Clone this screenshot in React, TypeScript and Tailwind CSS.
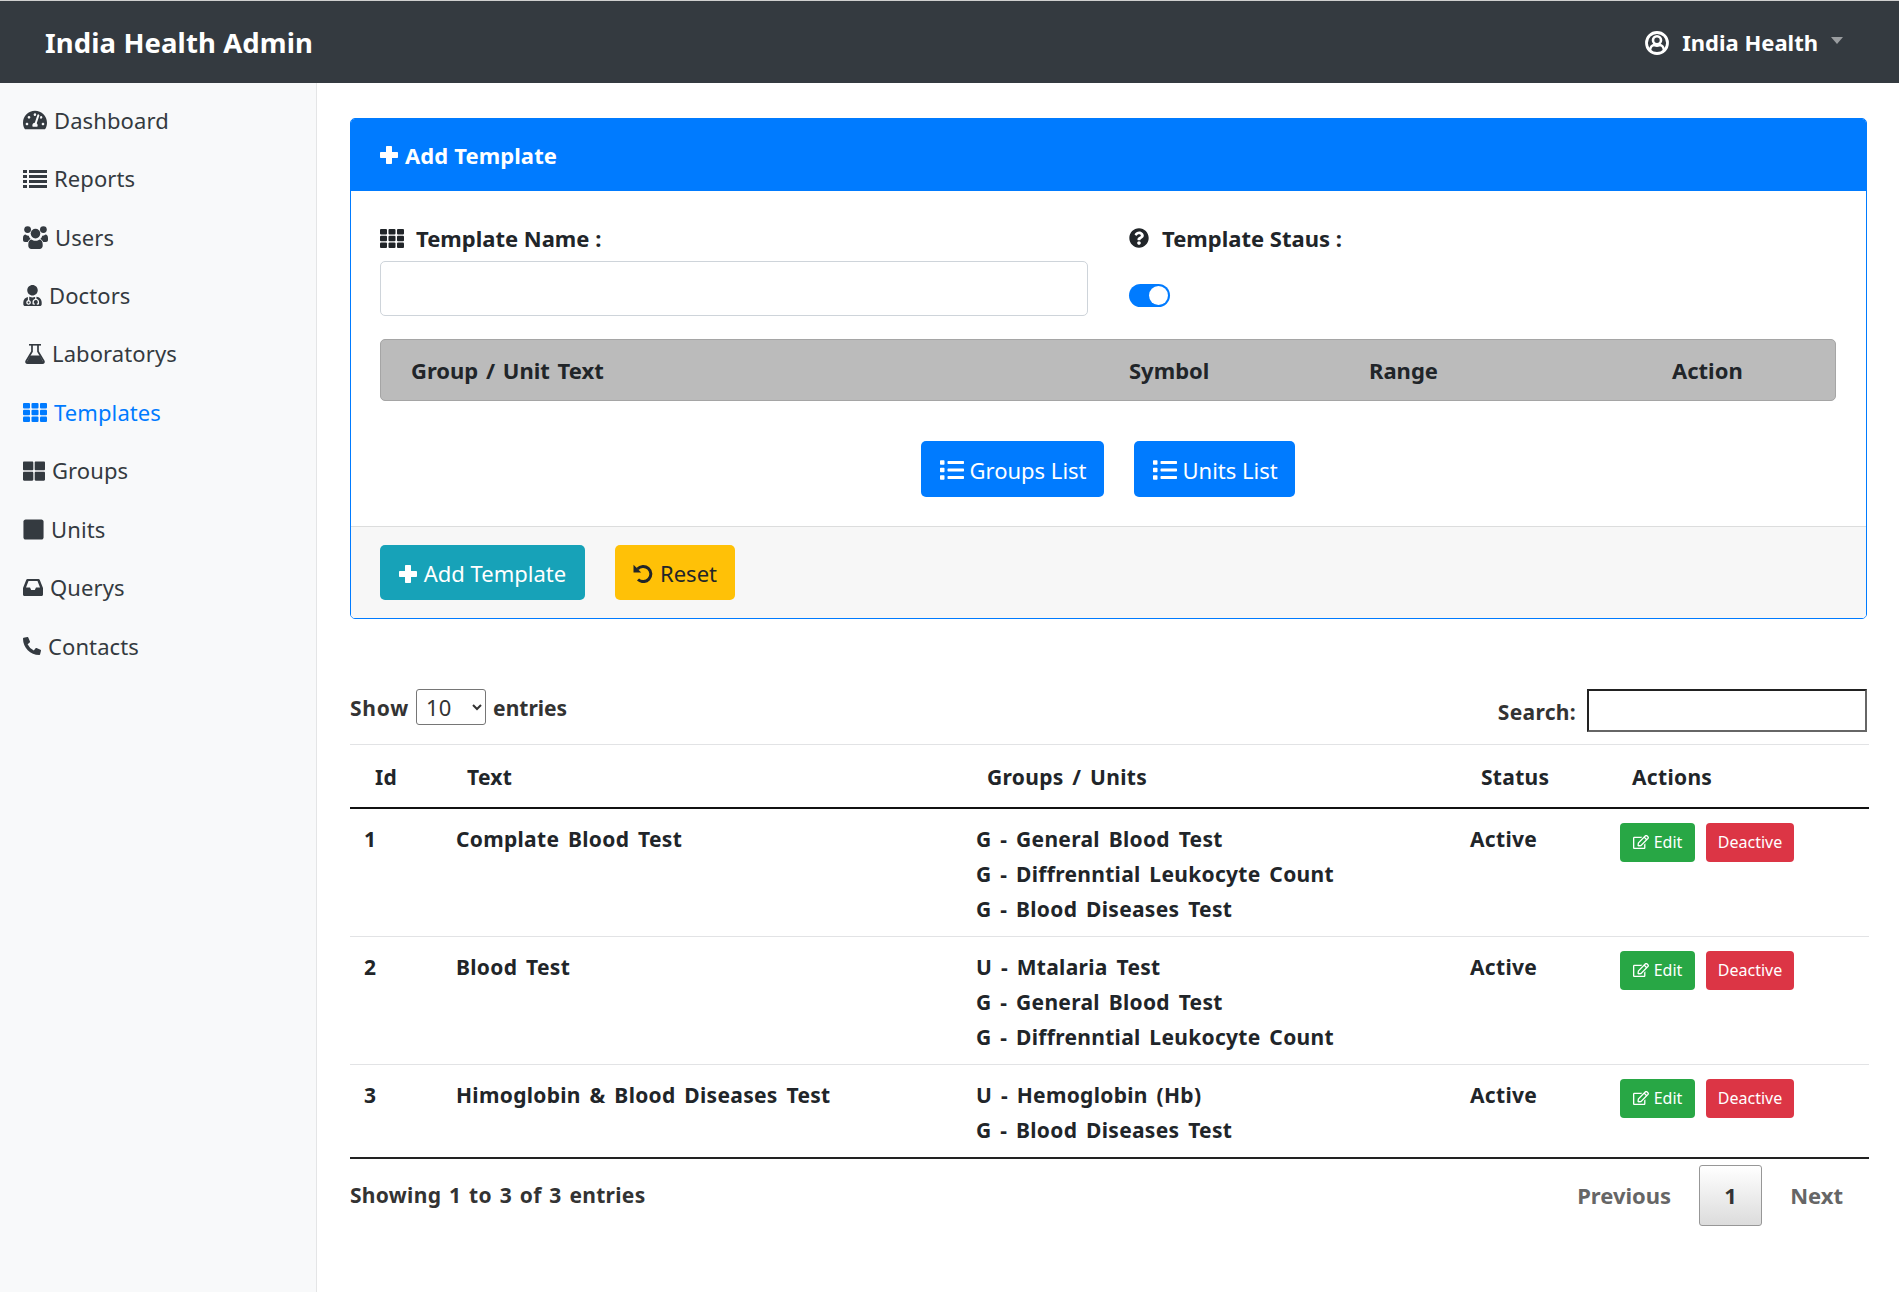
import {
  FaTachometerAlt,
  FaList,
  FaUserMd,
  FaThLarge,
  FaSquare,
  FaPhoneAlt,
  FaQuestionCircle,
  FaRegEdit,
} from "react-icons/fa";

// the reference uses older icon shapes than react-icons has, so a few are drawn here
function ListIcon() {
  return (
    <svg viewBox="0 0 24 19" fill="currentColor" className="w-[24px] h-[19px] mr-[7px]">
      <path d="M0 1h4v3H0zM6 1h18v3H6zM0 6h4v3H0zM6 6h18v3H6zM0 11h4v3H0zM6 11h18v3H6zM0 16h4v3H0zM6 16h18v3H6z" />
    </svg>
  );
}

function ThIcon(props: { className: string }) {
  return (
    <svg viewBox="0 0 24 19" fill="currentColor" className={props.className}>
      <rect x="0" y="0" width="7" height="5.4" rx="1" />
      <rect x="8.5" y="0" width="7" height="5.4" rx="1" />
      <rect x="17" y="0" width="7" height="5.4" rx="1" />
      <rect x="0" y="6.8" width="7" height="5.4" rx="1" />
      <rect x="8.5" y="6.8" width="7" height="5.4" rx="1" />
      <rect x="17" y="6.8" width="7" height="5.4" rx="1" />
      <rect x="0" y="13.6" width="7" height="5.4" rx="1" />
      <rect x="8.5" y="13.6" width="7" height="5.4" rx="1" />
      <rect x="17" y="13.6" width="7" height="5.4" rx="1" />
    </svg>
  );
}

function UsersIcon() {
  return (
    <svg viewBox="0 0 25 23" fill="currentColor" className="w-[25px] h-[23px] mr-[7px]">
      <circle cx="4.6" cy="3.6" r="3.4" />
      <circle cx="20.4" cy="3.6" r="3.4" />
      <circle cx="12.5" cy="7.6" r="4.8" />
      <path d="M0 12c0-2 1-3.500 2.500-3.500 1 .8 2 1.200 3.200 1.200.3 1.300 1 2.400 2 3.200-1.300.6-2.300 1.700-2.900 3.100H2c-1.200 0-2-.8-2-2zM25 12c0-2-1-3.500-2.500-3.500-1 .8-2 1.200-3.200 1.200-.3 1.300-1 2.400-2 3.200 1.300.6 2.300 1.700 2.900 3.100H23c1.200 0 2-.8 2-2z" />
      <path d="M8.500 13.400c1 .9 2.500 1.400 4 1.400s3-.5 4-1.400c2 .3 3.200 2.300 3.200 5v1.400c0 2-1.300 3.200-3 3.200H8.300c-1.700 0-3-1.200-3-3.200v-1.400c0-2.700 1.200-4.700 3.200-5z" />
    </svg>
  );
}

function FlaskIcon() {
  return (
    <svg viewBox="0 0 20 20" className="w-[20px] h-[20px] mr-[7px] ml-[2px]">
      <path d="M4 .8h12" stroke="currentColor" strokeWidth="1.6" />
      <path
        d="M7 1v6.500L1.300 17c-.6 1.100 0 2.100 1.200 2.100h15c1.200 0 1.800-1 1.200-2.100L13 7.500V1"
        fill="none"
        stroke="currentColor"
        strokeWidth="1.700"
      />
      <path d="M5.200 11.500h9.600l4 7.500H1.200z" fill="currentColor" />
    </svg>
  );
}

function InboxIcon() {
  return (
    <svg viewBox="0 0 20 17" fill="currentColor" className="w-[20px] h-[17px] mr-[7px]">
      <path
        fillRule="evenodd"
        d="M4.500 0h11c.6 0 1 .3 1.200.8L20 9v6.500c0 .9-.6 1.500-1.500 1.500h-17C.6 17 0 16.400 0 15.500V9L3.300.8C3.500.3 3.900 0 4.500 0zM5.500 2L3 8.500h4l1.200 2.500h3.600L13 8.500h4L14.500 2z"
      />
    </svg>
  );
}

function PlusIcon() {
  return (
    <svg viewBox="0 0 18 18" fill="currentColor" className="w-[18px] h-[18px] mr-[7px]">
      <path d="M7 0h4c.6 0 1 .4 1 1v5h5c.6 0 1 .4 1 1v4c0 .6-.4 1-1 1h-5v5c0 .6-.4 1-1 1H7c-.6 0-1-.4-1-1v-5H1c-.6 0-1-.4-1-1V7c0-.6.4-1 1-1h5V1c0-.6.4-1 1-1z" />
    </svg>
  );
}

function UndoIcon() {
  return (
    <svg viewBox="0 0 20 19" className="w-[20px] h-[19px] mr-[7px]">
      <path d="M4.500 5A7.600 7.600 0 1 1 5 15.500" fill="none" stroke="currentColor" strokeWidth="3" />
      <path d="M.5.800v7.700h7.700z" fill="currentColor" />
    </svg>
  );
}

function UserCircleIcon() {
  return (
    <svg viewBox="0 0 24 24" fill="none" stroke="currentColor" className="w-[24px] h-[24px] mr-[13px]">
      <circle cx="12" cy="12" r="10.500" strokeWidth="2.800" />
      <circle cx="12" cy="9.300" r="4" strokeWidth="2.600" />
      <path d="M5 19.500c.4-3.600 2.500-5.500 4.500-5.500 1.600 1 3.400 1 5 0 2 0 4.100 1.900 4.500 5.500" strokeWidth="2.400" />
    </svg>
  );
}

const navItems = [
  { label: "Dashboard", icon: <FaTachometerAlt className="w-[24px] h-[24px] mr-[7px]" /> },
  { label: "Reports", icon: <ListIcon /> },
  { label: "Users", icon: <UsersIcon /> },
  { label: "Doctors", icon: <FaUserMd className="w-[19px] h-[21px] mr-[7px]" /> },
  { label: "Laboratorys", icon: <FlaskIcon /> },
  { label: "Templates", icon: <ThIcon className="w-[24px] h-[19px] mr-[7px]" />, active: true },
  { label: "Groups", icon: <FaThLarge className="w-[22px] h-[22px] mr-[7px]" /> },
  { label: "Units", icon: <FaSquare className="w-[21px] h-[23px] mr-[7px]" /> },
  { label: "Querys", icon: <InboxIcon /> },
  { label: "Contacts", icon: <FaPhoneAlt className="w-[18px] h-[18px] mr-[7px]" /> },
];

const rows = [
  {
    id: 1,
    text: "Complate Blood Test",
    items: ["G - General Blood Test", "G - Diffrenntial Leukocyte Count", "G - Blood Diseases Test"],
  },
  {
    id: 2,
    text: "Blood Test",
    items: ["U - Mtalaria Test", "G - General Blood Test", "G - Diffrenntial Leukocyte Count"],
  },
  {
    id: 3,
    text: "Himoglobin & Blood Diseases Test",
    items: ["U - Hemoglobin (Hb)", "G - Blood Diseases Test"],
  },
];

export default function App() {
  return (
    <div className="min-h-[1292px] flex flex-col bg-white text-[#212529] font-['Noto_Sans',sans-serif] text-[20px]">
      <header className="h-[83px] shrink-0 border-t border-[#cfcfcf] bg-[#343a40] flex items-center justify-between pt-[2px] pl-[45px] pr-[56px] text-white">
        <span className="text-[27.5px] font-bold tracking-[0.1px]">India Health Admin</span>
        <div className="flex items-center">
          <UserCircleIcon />
          <span className="text-[22px] font-bold mb-[2px]">India Health</span>
          <span className="ml-[13px] mb-[6px] border-x-[6.5px] border-x-transparent border-t-[7px] border-t-[#9a9da0]" />
        </div>
      </header>

      <div className="flex flex-1">
        <aside className="w-[317px] shrink-0 bg-[#f8f9fa] border-r border-[#e4e5e6] pt-[8px] pl-[23px]">
          {navItems.map((item) => (
            <div
              key={item.label}
              className={
                "h-[58.45px] flex items-center " + (item.active ? "text-[#007bff]" : "text-[#343a40]")
              }
            >
              {item.icon}
              <span className="text-[22px] tracking-[0.1px]">{item.label}</span>
            </div>
          ))}
        </aside>

        <main className="flex-1 pl-[33px] pr-[30px] pt-[35px]">
          <section className="w-[1517px] border border-[#007bff] rounded-[5px] overflow-hidden">
            <div className="h-[72px] bg-[#007bff] text-white flex items-center pl-[29px]">
              <PlusIcon />
              <span className="text-[22px] font-bold tracking-[0.1px]">Add Template</span>
            </div>

            <div className="px-[29px] pt-[29px] h-[335px]">
              <div className="flex">
                <div className="w-[708px]">
                  <div className="flex items-center h-[36px] font-bold text-[22px]">
                    <ThIcon className="w-[24px] h-[19px] mr-[12px]" />
                    Template Name :
                  </div>
                  <input className="block mt-[5px] w-full h-[55px] border border-[#ced4da] rounded-[5px] bg-white" />
                </div>
                <div className="ml-[41px]">
                  <div className="flex items-center h-[36px] font-bold text-[22px]">
                    <FaQuestionCircle className="w-[20px] h-[20px] mr-[13px]" />
                    Template Staus :
                  </div>
                  <div className="mt-[28px] w-[41px] h-[23px] rounded-full bg-[#007bff] flex items-center justify-end pr-[2px]">
                    <span className="w-[19px] h-[19px] rounded-full bg-white" />
                  </div>
                </div>
              </div>

              <div className="mt-[23px] w-[1456px] h-[62px] bg-[#bbbbbb] border border-[#a5a5a5] rounded-[5px] flex items-center text-[22px] font-bold [word-spacing:2px]">
                <span className="ml-[30px] w-[718px]">Group / Unit Text</span>
                <span className="w-[240px]">Symbol</span>
                <span className="w-[303px]">Range</span>
                <span>Action</span>
              </div>

              <div className="mt-[40px] flex justify-center gap-[30px] text-[22px] text-white pr-[2px]">
                <button className="h-[56px] w-[183px] pt-[2px] pl-[19px] rounded-[5px] bg-[#007bff] flex items-center">
                  <FaList className="w-[24px] h-[24px] mr-[6px]" />
                  Groups List
                </button>
                <button className="h-[56px] w-[161px] pt-[2px] pl-[19px] rounded-[5px] bg-[#007bff] flex items-center">
                  <FaList className="w-[24px] h-[24px] mr-[6px]" />
                  Units List
                </button>
              </div>
            </div>

            <div className="h-[92px] border-t border-[#dcdddd] bg-[#f7f7f7] pl-[29px] pt-[18px] flex gap-[30px] text-[22px]">
              <button className="h-[55px] w-[205px] pt-[2px] rounded-[5px] bg-[#17a2b8] text-white flex items-center justify-center">
                <PlusIcon />
                Add Template
              </button>
              <button className="h-[55px] w-[120px] pt-[2px] rounded-[5px] bg-[#ffc107] flex items-center justify-center">
                <UndoIcon />
                Reset
              </button>
            </div>
          </section>

          <div className="mt-[70px] h-[55px] flex justify-between font-bold text-[#333]">
            <div className="flex items-start">
              <span className="leading-[38px] text-[21px] tracking-[0.8px]">Show</span>
              <select className="mx-[7px] w-[70px] h-[36px] border border-[#767676] rounded-[3px] bg-white px-[5px] font-normal text-[22px]">
                <option>10</option>
              </select>
              <span className="leading-[38px] text-[21px]">entries</span>
            </div>
            <div className="flex items-start pr-[2px]">
              <span className="leading-[46px] text-[21px] mr-[11px] tracking-[0.3px]">Search:</span>
              <input className="w-[280px] h-[43px] border-2 border-t-[#222] border-l-[#222] border-r-[#666] border-b-[#666] bg-white" />
            </div>
          </div>

          <table className="w-[1519px] table-fixed border-collapse font-bold tracking-[0.3px] [word-spacing:3px]">
            <thead>
              <tr className="h-[63px] border-t border-b-2 border-t-[#e2e3e5] border-b-[#111]">
                <th className="w-[92px] pl-[25px] pt-[3px] text-left font-bold text-[21px]">Id</th>
                <th className="w-[520px] pl-[25px] pt-[3px] text-left font-bold text-[21px]">Text</th>
                <th className="w-[494px] pl-[25px] pt-[3px] text-left font-bold text-[21px]">Groups / Units</th>
                <th className="w-[150px] pl-[25px] pt-[3px] text-left font-bold text-[21px]">Status</th>
                <th className="pl-[26px] pt-[3px] text-left font-bold text-[21px]">Actions</th>
              </tr>
            </thead>
            <tbody>
              {rows.map((row, i) => (
                <tr key={row.id} className={i < 2 ? "border-b border-[#e2e3e5]" : "border-b-2 border-[#222]"}>
                  <td className="pl-[14px] pt-[13px] pb-[9px] align-top text-[21px] leading-[35px]">{row.id}</td>
                  <td className="pl-[14px] pt-[13px] pb-[9px] align-top text-[21px] leading-[35px]">{row.text}</td>
                  <td className="pl-[14px] pt-[13px] pb-[9px] align-top text-[21px] leading-[35px]">
                    {row.items.map((t) => (
                      <div key={t}>{t}</div>
                    ))}
                  </td>
                  <td className="pl-[14px] pt-[13px] pb-[9px] align-top text-[21px] leading-[35px]">Active</td>
                  <td className="pl-[14px] pt-[14px] pb-[9px] align-top tracking-normal">
                    <div className="flex gap-[11px] text-[16px] font-normal text-white">
                      <button className="h-[39px] w-[75px] rounded-[4px] bg-[#28a745] flex items-center justify-center">
                        <FaRegEdit className="w-[16px] h-[16px] mr-[5px]" />
                        Edit
                      </button>
                      <button className="h-[39px] w-[88px] rounded-[4px] bg-[#dc3545] flex items-center justify-center">
                        Deactive
                      </button>
                    </div>
                  </td>
                </tr>
              ))}
            </tbody>
          </table>

          <div className="mt-[6px] flex justify-between items-start">
            <span className="mt-[15px] text-[21px] font-bold text-[#333] tracking-[0.3px] [word-spacing:2px]">Showing 1 to 3 of 3 entries</span>
            <div className="flex items-center text-[22px] font-bold text-[#666] pr-[26px]">
              <span className="mr-[28px]">Previous</span>
              <span className="w-[63px] h-[61px] flex items-center justify-center border border-[#979797] rounded-[3px] bg-gradient-to-b from-white to-[#dcdcdc] text-[#333]">
                1
              </span>
              <span className="ml-[28px]">Next</span>
            </div>
          </div>
        </main>
      </div>
    </div>
  );
}
